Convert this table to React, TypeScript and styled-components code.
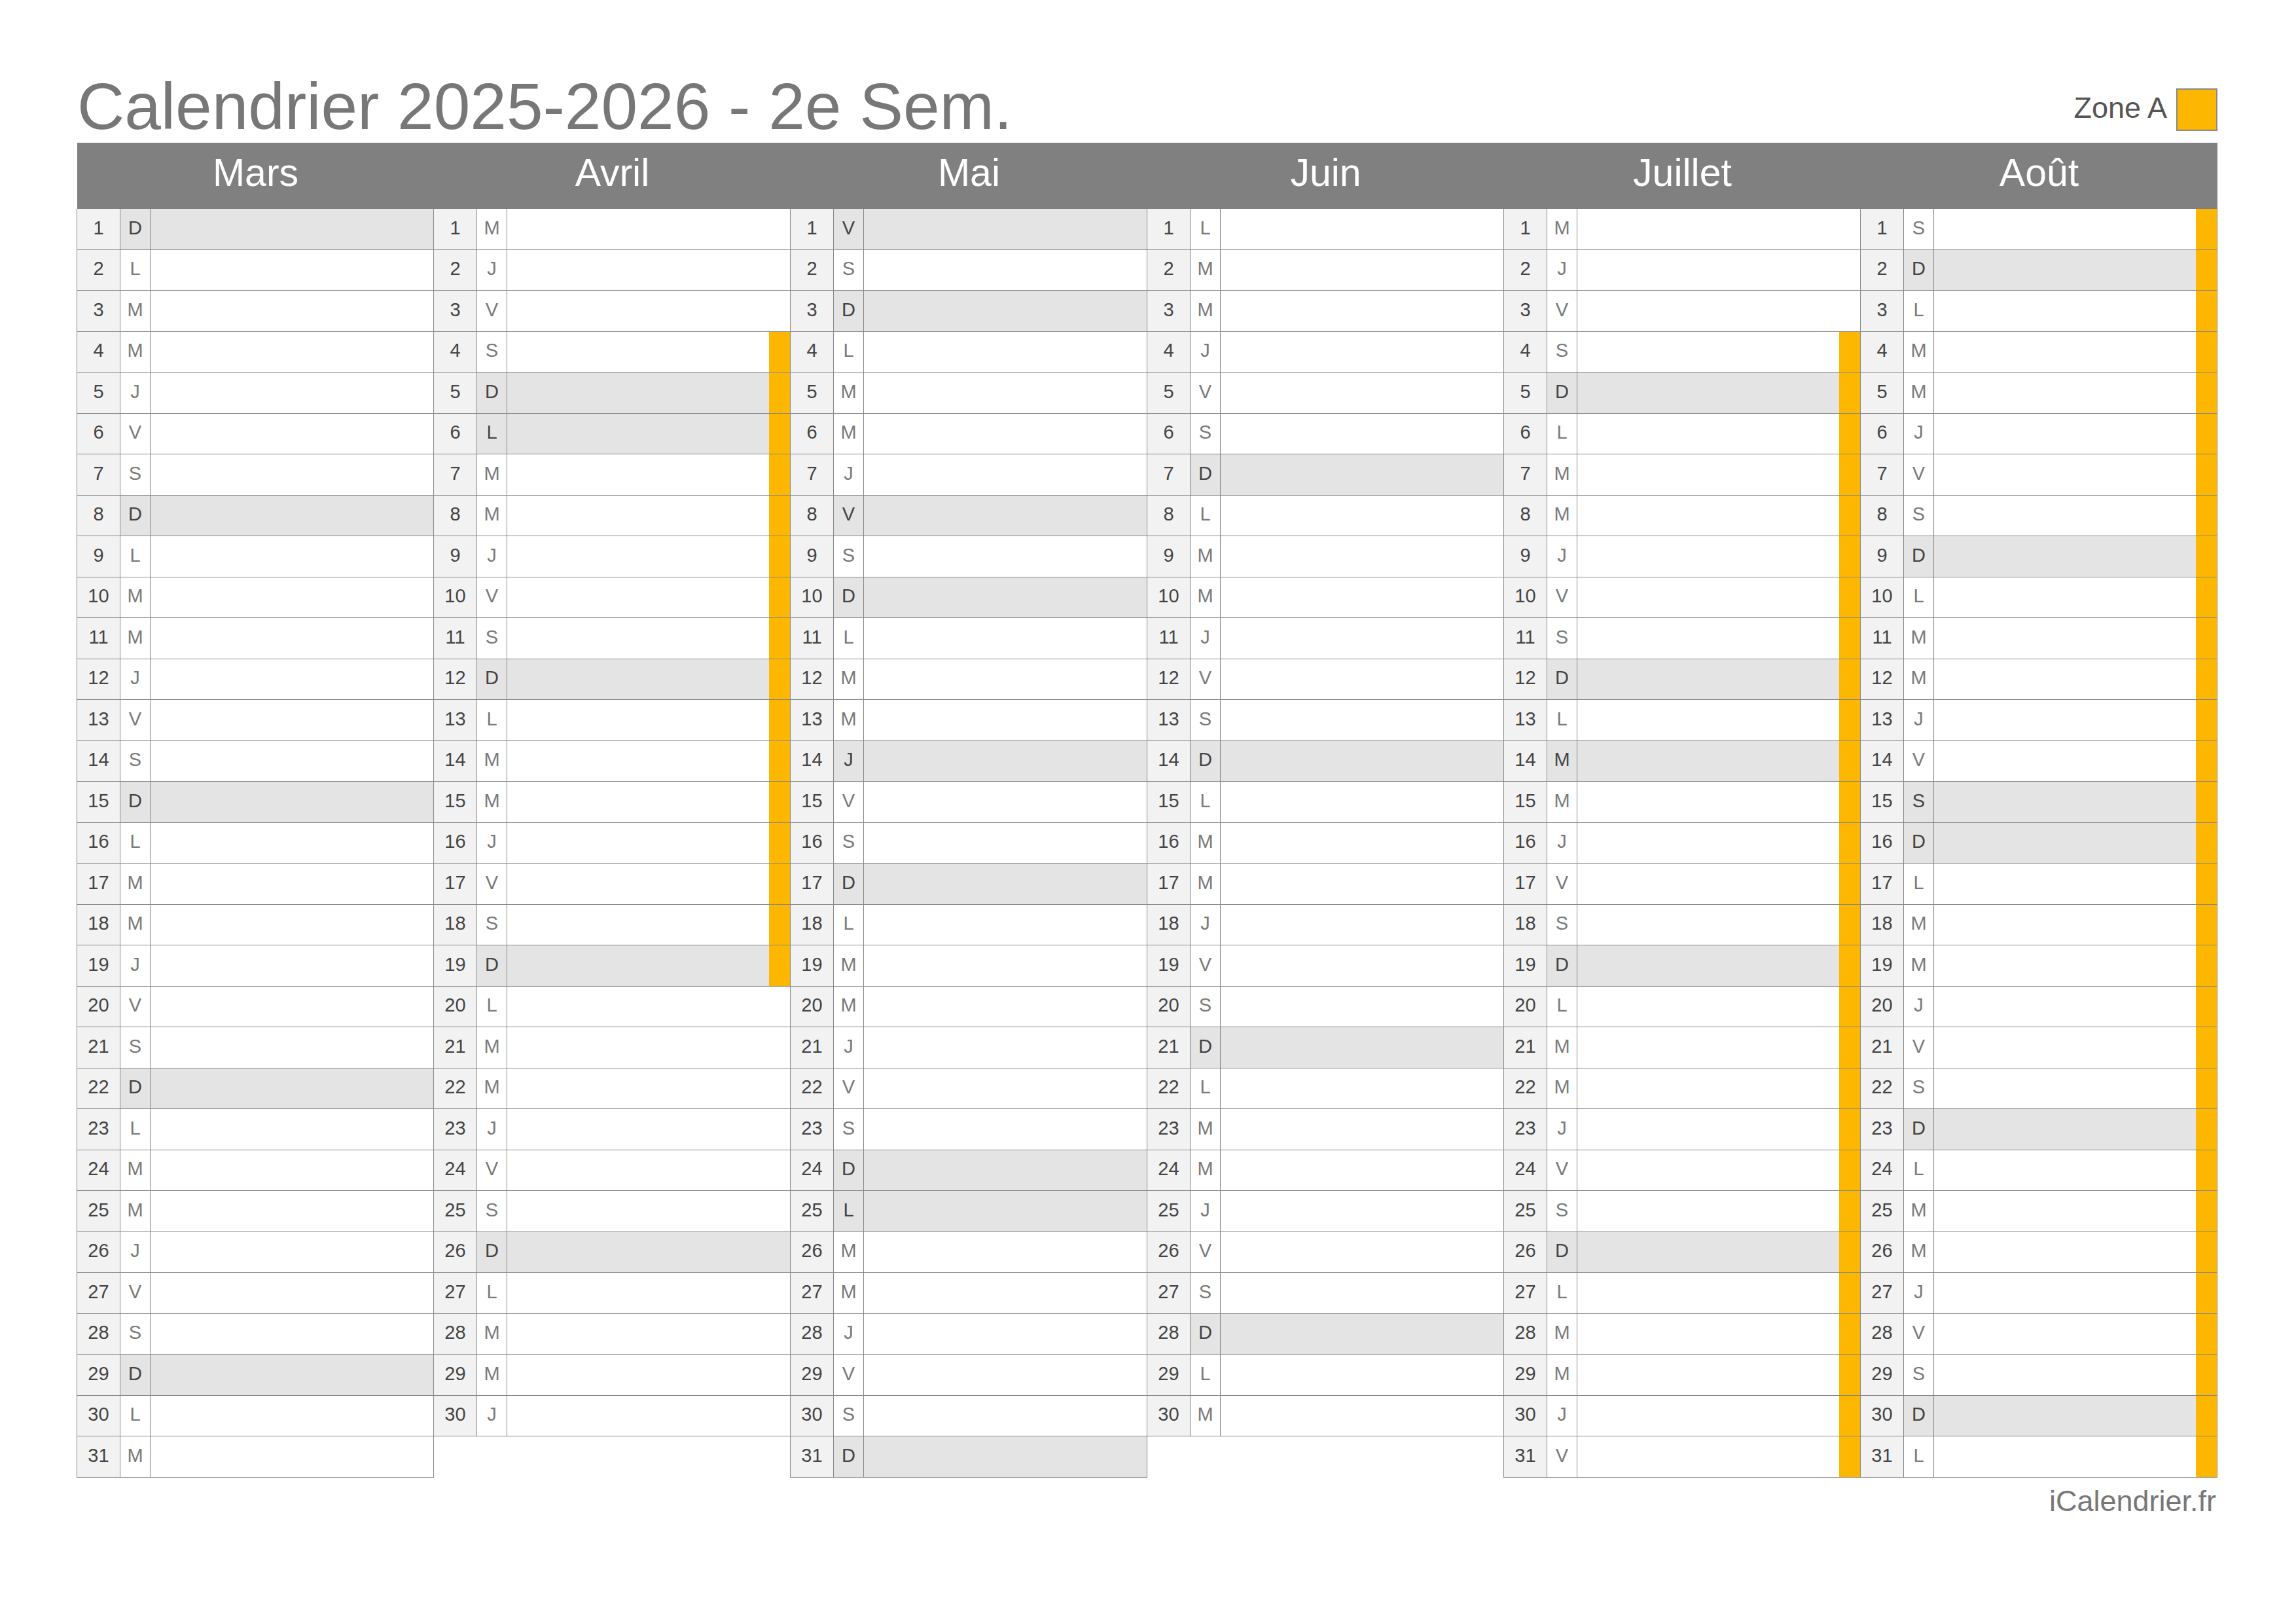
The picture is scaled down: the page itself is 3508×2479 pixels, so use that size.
import React from "react";
import styled, { createGlobalStyle } from "styled-components";

const GlobalStyle = createGlobalStyle`
  html, body {
    margin: 0;
    padding: 0;
    background: #ffffff;
  }
  body {
    font-family: "Liberation Sans", Arial, Helvetica, sans-serif;
  }
`;

const LINE = "#888888";
const ORANGE = "#FDB701";

const Page = styled.div`
  padding: 112px 0 0 118px;
  width: 3270px;
`;

const TitleRow = styled.div`
  display: flex;
  justify-content: space-between;
  align-items: flex-start;
  height: 106px;
`;

const Title = styled.h1`
  margin: 0;
  font-size: 100px;
  line-height: 100px;
  font-weight: 400;
  color: #777777;
  letter-spacing: 0;
`;

const Legend = styled.div`
  display: flex;
  align-items: flex-start;
  gap: 14px;
  margin-top: 23px;
`;

const LegendLabel = styled.span`
  font-size: 45px;
  line-height: 45px;
  color: #555555;
  margin-top: 7px;
`;

const LegendSwatch = styled.div`
  width: 63px;
  height: 65px;
  box-sizing: border-box;
  background: ${ORANGE};
  border: 2px solid #8a8a8a;
`;

const HeaderBar = styled.div`
  display: grid;
  grid-template-columns: repeat(6, 545px);
  height: 101px;
  background: #808080;
`;

const MonthName = styled.div`
  color: #ffffff;
  font-size: 59px;
  line-height: 59px;
  padding-top: 17px;
  text-align: center;
`;

const MonthsGrid = styled.div`
  display: grid;
  grid-template-columns: repeat(6, 545px);
  align-items: start;
`;

const MonthColumn = styled.div`
  display: flex;
  flex-direction: column;
`;

const DayRow = styled.div`
  display: grid;
  grid-template-columns: 66px 46px 1fr;
  height: 62.5px;
  box-sizing: border-box;
  border-right: 1px solid ${LINE};
  border-bottom: 1px solid ${LINE};
  box-shadow: -1px 0 0 ${LINE};
`;

const NumCell = styled.div`
  display: flex;
  align-items: center;
  justify-content: center;
  box-sizing: border-box;
  padding-bottom: 3px;
  border-right: 1px solid ${LINE};
  background: #f2f2f2;
  color: #444444;
  font-size: 29px;
  line-height: 29px;
`;

const LetterCell = styled.div<{ $shaded: boolean }>`
  display: flex;
  align-items: center;
  justify-content: center;
  box-sizing: border-box;
  padding-bottom: 3px;
  border-right: 1px solid ${LINE};
  background: ${(p) => (p.$shaded ? "#e4e4e4" : "#ffffff")};
  color: ${(p) => (p.$shaded ? "#444444" : "#7a7a7a")};
  font-size: 29px;
  line-height: 29px;
`;

const RestCell = styled.div<{ $shaded: boolean }>`
  display: flex;
  justify-content: flex-end;
  background: ${(p) => (p.$shaded ? "#e4e4e4" : "#ffffff")};
`;

const VacationBar = styled.div`
  width: 32px;
  background: ${ORANGE};
`;

const Footer = styled.div`
  margin-top: 13px;
  text-align: right;
  font-size: 45px;
  line-height: 45px;
  color: #777777;
  padding-right: 2px;
`;

const LETTERS = ["D", "L", "M", "M", "J", "V", "S"];

type MonthDef = {
  name: string;
  index: number;
  holidays: number[];
  vacation: [number, number] | null;
};

const MONTHS: MonthDef[] = [
  { name: "Mars", index: 2, holidays: [], vacation: null },
  { name: "Avril", index: 3, holidays: [6], vacation: [4, 19] },
  { name: "Mai", index: 4, holidays: [1, 8, 14, 25], vacation: null },
  { name: "Juin", index: 5, holidays: [], vacation: null },
  { name: "Juillet", index: 6, holidays: [14], vacation: [4, 31] },
  { name: "Août", index: 7, holidays: [15], vacation: [1, 31] },
];

function daysIn(year: number, month: number) {
  return new Date(year, month + 1, 0).getDate();
}

function Month({ def }: { def: MonthDef }) {
  const count = daysIn(2026, def.index);
  const days = Array.from({ length: count }, (_, i) => i + 1);
  return (
    <MonthColumn>
      {days.map((d) => {
        const dow = new Date(2026, def.index, d).getDay();
        const shaded = dow === 0 || def.holidays.includes(d);
        const onVacation =
          def.vacation !== null && d >= def.vacation[0] && d <= def.vacation[1];
        return (
          <DayRow key={d}>
            <NumCell>{d}</NumCell>
            <LetterCell $shaded={shaded}>{LETTERS[dow]}</LetterCell>
            <RestCell $shaded={shaded}>{onVacation && <VacationBar />}</RestCell>
          </DayRow>
        );
      })}
    </MonthColumn>
  );
}

export default function App() {
  return (
    <>
      <GlobalStyle />
      <Page>
        <TitleRow>
          <Title>Calendrier 2025-2026 - 2e Sem.</Title>
          <Legend>
            <LegendLabel>Zone A</LegendLabel>
            <LegendSwatch />
          </Legend>
        </TitleRow>
        <HeaderBar>
          {MONTHS.map((m) => (
            <MonthName key={m.name}>{m.name}</MonthName>
          ))}
        </HeaderBar>
        <MonthsGrid>
          {MONTHS.map((m) => (
            <Month key={m.name} def={m} />
          ))}
        </MonthsGrid>
        <Footer>iCalendrier.fr</Footer>
      </Page>
    </>
  );
}
